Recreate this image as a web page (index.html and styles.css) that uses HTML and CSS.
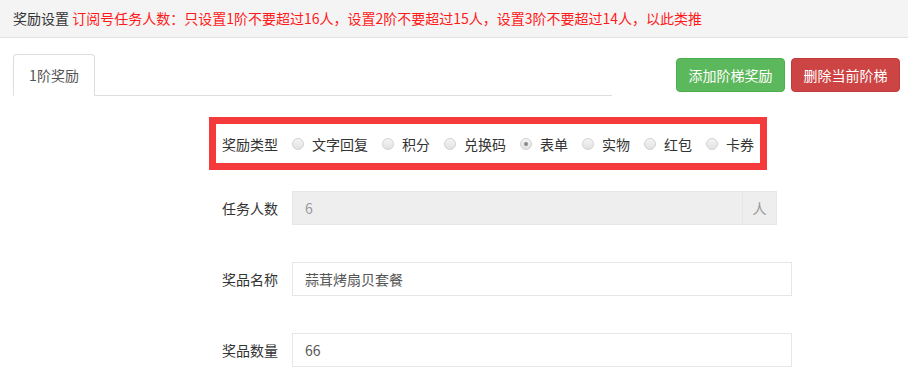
FILE: index.html
```html
<!DOCTYPE html>
<html lang="zh-CN">
<head>
  <meta charset="UTF-8">
  <title>奖励设置</title>
  <link rel="stylesheet" href="styles.css">
</head>
<body>
  <div class="topbar">
    奖励设置 <span class="tip">订阅号任务人数：只设置1阶不要超过16人，设置2阶不要超过15人，设置3阶不要超过14人，以此类推</span>
  </div>

  <div class="panel">
    <div class="tab-row">
      <ul class="tabs">
        <li class="tab active">1阶奖励</li>
      </ul>
      <div class="actions">
        <button class="btn btn-green">添加阶梯奖励</button>
        <button class="btn btn-red">删除当前阶梯</button>
      </div>
    </div>

    <div class="form">
      <div class="form-row highlight">
        <label class="form-label">奖励类型</label>
        <div class="radios">
          <label class="radio"><span class="dot"></span>文字回复</label>
          <label class="radio"><span class="dot"></span>积分</label>
          <label class="radio"><span class="dot"></span>兑换码</label>
          <label class="radio"><span class="dot checked"></span>表单</label>
          <label class="radio"><span class="dot"></span>实物</label>
          <label class="radio"><span class="dot"></span>红包</label>
          <label class="radio"><span class="dot"></span>卡券</label>
        </div>
      </div>

      <div class="form-row">
        <label class="form-label">任务人数</label>
        <div class="input-group">
          <input class="input disabled" type="text" value="6" disabled>
          <span class="addon">人</span>
        </div>
      </div>

      <div class="form-row">
        <label class="form-label">奖品名称</label>
        <input class="input wide" type="text" value="蒜茸烤扇贝套餐">
      </div>

      <div class="form-row">
        <label class="form-label">奖品数量</label>
        <input class="input wide" type="text" value="66">
      </div>
    </div>
  </div>
</body>
</html>
```

FILE: styles.css
```css
body {
  margin: 0;
  font-family: "Noto Sans CJK SC", "Noto Sans", sans-serif;
  font-size: 14px;
  color: #333;
  background: #fff;
}
.topbar {
  height: 37px;
  line-height: 37px;
  padding-left: 13px;
  background: #f4f4f4;
  border-bottom: 1px solid #e2e2e2;
  white-space: nowrap;
}
.tip {
  color: #ff1a1a;
}
.panel {
  padding: 16px 8px 0 13px;
}
.tab-row {
  display: flex;
  align-items: flex-start;
}
.tabs {
  list-style: none;
  margin: 0;
  padding: 0;
  width: 599px;
  display: flex;
  border-bottom: 1px solid #ddd;
}
.tab {
  width: 80px;
  height: 40px;
  line-height: 40px;
  text-align: center;
  color: #555;
  border: 1px solid #ddd;
  border-bottom-color: #fff;
  border-radius: 4px 4px 0 0;
  margin-bottom: -1px;
  background: #fff;
}
.actions {
  margin-left: auto;
  margin-top: 4px;
  display: flex;
  gap: 6px;
}
.btn {
  width: 109px;
  height: 34px;
  border: 1px solid transparent;
  border-radius: 4px;
  color: #fff;
  font-family: inherit;
  font-size: 14px;
  padding: 0;
}
.btn-green {
  background: #5cb85c;
  border-color: #4cae4c;
}
.btn-red {
  background: #cd4444;
  border-color: #c23b3b;
}
.form {
  margin-left: 196px;
  margin-top: 21px;
  width: 583px;
  display: flex;
  flex-direction: column;
  align-items: flex-start;
  gap: 37px;
}
.form-row {
  display: flex;
  align-items: center;
  padding-left: 13px;
}
.form-row.highlight {
  border: 7px solid #f43a3a;
  padding: 0 6px;
  height: 39px;
  margin-bottom: -16px;
}
.form-label {
  width: 70px;
  flex: none;
}
.radios {
  display: flex;
  align-items: center;
  gap: 14px;
}
.radio {
  display: flex;
  align-items: center;
  gap: 8px;
}
.dot {
  width: 10px;
  height: 10px;
  border: 1px solid #d2d2d2;
  border-radius: 50%;
  background: linear-gradient(#f4f4f4, #e2e2e2);
  position: relative;
}
.dot.checked::after {
  content: "";
  position: absolute;
  left: 3px;
  top: 3px;
  width: 4px;
  height: 4px;
  border-radius: 50%;
  background: #8a8a8a;
}
.input {
  box-sizing: border-box;
  height: 34px;
  border: 1px solid #e5e6e7;
  padding: 0 12px;
  font-family: inherit;
  font-size: 14px;
  color: #555;
  background: #fff;
  outline: none;
}
.wide {
  width: 500px;
}
.input-group {
  display: flex;
  width: 485px;
}
.input.disabled {
  flex: 1;
  background: #eee;
  color: #999;
  border-right: none;
}
.addon {
  box-sizing: border-box;
  width: 35px;
  height: 34px;
  line-height: 32px;
  text-align: center;
  color: #999;
  background: #eee;
  border: 1px solid #e5e6e7;
}
```
